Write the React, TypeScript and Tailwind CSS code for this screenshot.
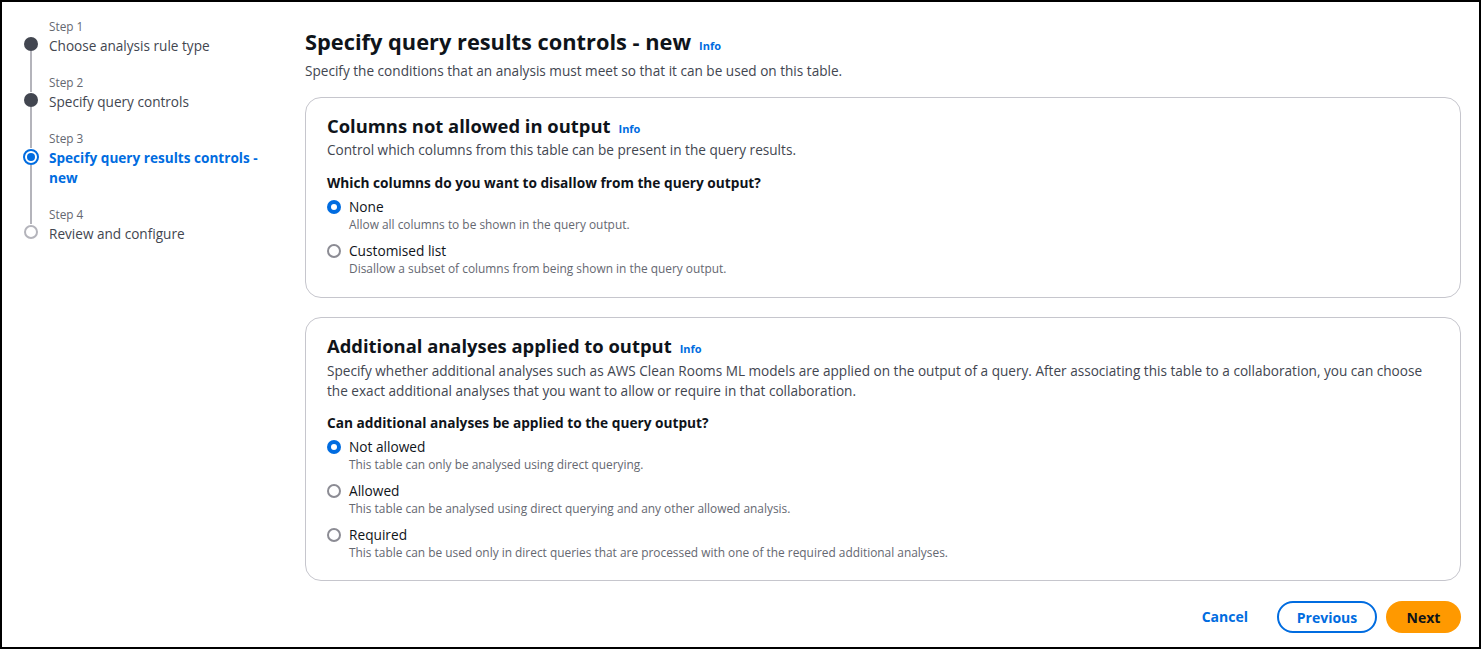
const steps = [
  { label: "Step 1", title: "Choose analysis rule type", state: "done" },
  { label: "Step 2", title: "Specify query controls", state: "done" },
  { label: "Step 3", title: "Specify query results controls - new", state: "current" },
  { label: "Step 4", title: "Review and configure", state: "todo" },
];

function Radio({ checked }: { checked: boolean }) {
  return checked ? (
    <span className="mt-[3px] flex h-[14px] w-[14px] shrink-0 items-center justify-center rounded-full bg-[#006ce0]">
      <span className="h-[6px] w-[6px] rounded-full bg-white" />
    </span>
  ) : (
    <span className="mt-[3px] h-[14px] w-[14px] shrink-0 rounded-full border-2 border-[#8c8c94] bg-white" />
  );
}

function Option({ checked, label, hint }: { checked: boolean; label: string; hint: string }) {
  return (
    <div className="flex gap-2">
      <Radio checked={checked} />
      <div>
        <div className="text-[13.7px] leading-5 text-[#0f141a]">{label}</div>
        <div className="-mt-[1px] text-[11.9px] leading-4 text-[#656871]">{hint}</div>
      </div>
    </div>
  );
}

function Info() {
  return <span className="ml-2 text-[11px] font-bold text-[#006ce0]">Info</span>;
}

export default function App() {
  return (
    <div
      className="h-[649px] w-[1481px] overflow-hidden border-2 border-black bg-white text-[#0f141a]"
      style={{ fontFamily: '"Open Sans", "Noto Sans", sans-serif' }}
    >
      <div className="flex">
        {/* steps */}
        <aside className="w-[303px] shrink-0 pl-[22px] pt-[14px]">
          {steps.map((s, i) => (
            <div key={s.label} className="relative flex gap-[11px]">
              <div className="flex w-[14px] flex-col items-center">
                <div className="h-[20px] w-[2px] bg-[#b4b4bb]" style={{ visibility: i === 0 ? "hidden" : "visible" }} />
                {s.state === "done" && <span className="mt-[1px] h-[14px] w-[14px] rounded-full bg-[#424650]" />}
                {s.state === "current" && (
                  <span className="mt-[1px] flex h-[16px] w-[16px] items-center justify-center rounded-full border-2 border-[#006ce0]">
                    <span className="h-[8px] w-[8px] rounded-full bg-[#006ce0]" />
                  </span>
                )}
                {s.state === "todo" && <span className="mt-[1px] h-[14px] w-[14px] rounded-full border-2 border-[#b4b4bb]" />}
                {i < steps.length - 1 && <div className="w-[2px] flex-1 bg-[#b4b4bb]" />}
              </div>
              <div className="pb-[16px]">
                <div className="text-[11.8px] leading-[20px] text-[#656871]">{s.label}</div>
                <div
                  className={
                    s.state === "current"
                      ? "w-[215px] text-[13.6px] font-bold leading-5 text-[#006ce0]"
                      : "text-[13.6px] leading-5 text-[#424650]"
                  }
                >
                  {s.title}
                </div>
              </div>
            </div>
          ))}
        </aside>

        {/* main */}
        <main className="flex-1 pr-[18px] pt-[26px]">
          <h1 className="flex items-baseline text-[21.8px] font-bold leading-7">
            Specify query results controls - new
            <Info />
          </h1>
          <p className="mt-[1px] text-[13.6px] leading-5 text-[#424650]">
            Specify the conditions that an analysis must meet so that it can be used on this table.
          </p>

          <section className="mt-[16px] rounded-2xl border border-[#c6c6cd] px-[21px] pb-[21px] pt-[16px]">
            <h2 className="flex items-baseline text-[18.4px] font-bold leading-6">
              Columns not allowed in output
              <Info />
            </h2>
            <p className="-mt-[1px] text-[13.6px] leading-5 text-[#424650]">
              Control which columns from this table can be present in the query results.
            </p>
            <div className="mt-[13px] text-[13.7px] font-bold leading-5">
              Which columns do you want to disallow from the query output?
            </div>
            <div className="mt-[4px] flex flex-col gap-[9px]">
              <Option checked label="None" hint="Allow all columns to be shown in the query output." />
              <Option
                checked={false}
                label="Customised list"
                hint="Disallow a subset of columns from being shown in the query output."
              />
            </div>
          </section>

          <section className="mt-[19px] rounded-2xl border border-[#c6c6cd] px-[21px] pb-[20px] pt-[16px]">
            <h2 className="flex items-baseline text-[18.4px] font-bold leading-6">
              Additional analyses applied to output
              <Info />
            </h2>
            <p className="text-[13.6px] leading-5 text-[#424650]">
              Specify whether additional analyses such as AWS Clean Rooms ML models are applied on the output of a
              query. After associating this table to a collaboration, you can choose the exact additional analyses
              that you want to allow or require in that collaboration.
            </p>
            <div className="mt-[12px] text-[13.7px] font-bold leading-5">
              Can additional analyses be applied to the query output?
            </div>
            <div className="mt-[4px] flex flex-col gap-[9px]">
              <Option checked label="Not allowed" hint="This table can only be analysed using direct querying." />
              <Option
                checked={false}
                label="Allowed"
                hint="This table can be analysed using direct querying and any other allowed analysis."
              />
              <Option
                checked={false}
                label="Required"
                hint="This table can be used only in direct queries that are processed with one of the required additional analyses."
              />
            </div>
          </section>

          <div className="mt-[20px] flex items-center justify-end gap-[9px]">
            <button className="px-[20px] text-[14px] font-bold leading-[32px] text-[#006ce0]">Cancel</button>
            <button className="h-[32px] w-[100px] rounded-full border-2 border-[#006ce0] text-[14px] font-bold text-[#006ce0]">
              Previous
            </button>
            <button className="h-[32px] w-[75px] rounded-full bg-[#ff9900] text-[14px] font-bold text-[#0f141a]">
              Next
            </button>
          </div>
        </main>
      </div>
    </div>
  );
}
